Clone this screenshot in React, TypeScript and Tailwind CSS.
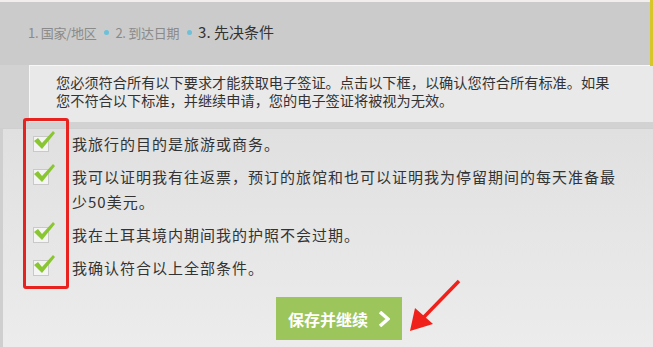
import React from 'react';

const font = { fontFamily: '"Noto Sans CJK SC", "Noto Sans", sans-serif' };

const Check: React.FC = () => (
    <div className="relative w-[16px] h-[16px] bg-[#f4f4f4] border border-[#c9c9c9] shrink-0">
        <svg className="absolute -top-[9px] -left-[2px]" width="24" height="24" viewBox="0 0 24 24">
            <path d="M2 13 L6 10 L10 15 L21 3 L23 5 L10 21 Z" fill="#8ac632" />
        </svg>
    </div>
);

const items: string[][] = [
    ['我旅行的目的是旅游或商务。'],
    ['我可以证明我有往返票，预订的旅馆和也可以证明我为停留期间的每天准备最', '少50美元。'],
    ['我在土耳其境内期间我的护照不会过期。'],
    ['我确认符合以上全部条件。'],
];

const App: React.FC = () => {
    return (
        <div className="relative w-[653px] h-[347px] overflow-hidden bg-[#e4e4e4] flex flex-col" style={font}>
            <div className="h-[2px] bg-[#f3eeee] shrink-0" />
            <div className="absolute right-0 top-0 w-[3px] h-[66px] bg-[#d6c62a]" />
            {/* header */}
            <div className="h-[63px] shrink-0 bg-[#cbcbcb] flex items-center pl-[28px] gap-[6px] pb-[2px]">
                <span className="text-[13px] text-[#8a8a8a] tracking-[-0.3px]">1. 国家/地区</span>
                <span className="w-[5px] h-[5px] rounded-full bg-[#6cc0d8] ml-[2px]" />
                <span className="text-[13px] text-[#8a8a8a] tracking-[-0.3px]">2. 到达日期</span>
                <span className="w-[5px] h-[5px] rounded-full bg-[#6cc0d8] ml-[2px]" />
                <span className="text-[15px] text-[#333]">3. 先决条件</span>
            </div>
            {/* notice */}
            <div className="bg-[#d2d2d2] pl-[29px] pb-[6px] shrink-0">
                <div className="bg-[#e9e9e9] border-t border-l border-[#f7f7f7] pl-[26px] pr-[30px] pt-[7px] pb-[13px] text-[14.2px] leading-[18px] text-[#333]">
                    <div>您必须符合所有以下要求才能获取电子签证。点击以下框，以确认您符合所有标准。如果</div>
                    <div>您不符合以下标准，并继续申请，您的电子签证将被视为无效。</div>
                </div>
            </div>
            {/* list */}
            <div className="flex-1 border-t border-l-[3px] border-[#cfcfcf] bg-gradient-to-b from-[#e0e0e0] to-[#ececec] flex flex-col">
                <div className="flex flex-col gap-[8px] pt-[2px] pl-[30px]">
                    {items.map((lines, i) => (
                        <div key={i} className="flex gap-[23px] items-start">
                            <div className="pt-[5px]">
                                <Check />
                            </div>
                            <div className="text-[15px] leading-[25px] tracking-[1px] text-[#333]">
                                {lines.map((l, j) => (
                                    <div key={j}>{l}</div>
                                ))}
                            </div>
                        </div>
                    ))}
                </div>
                <div className="flex justify-center pt-[17px] pl-[22px]">
                    <button className="w-[126px] h-[43px] bg-[#9cc55b] text-white text-[16px] font-bold flex items-center justify-center gap-[10px]">
                        保存并继续
                        <svg width="12" height="16" viewBox="0 0 12 16">
                            <path d="M2 1 L10 8 L2 15" stroke="white" strokeWidth="3.5" fill="none" />
                        </svg>
                    </button>
                </div>
            </div>
            {/* red highlight */}
            <div className="absolute left-[23px] top-[118px] w-[46px] h-[171px] border-[3px] border-[#e8231f] rounded-[3px]" />
            {/* arrow */}
            <svg className="absolute left-0 top-0" width="653" height="347">
                <line x1="459" y1="281" x2="424" y2="317" stroke="#f0201a" strokeWidth="3.5" />
                <polygon points="410,331 415,308 433,324" fill="#f0201a" />
            </svg>
        </div>
    );
};

export default App;
